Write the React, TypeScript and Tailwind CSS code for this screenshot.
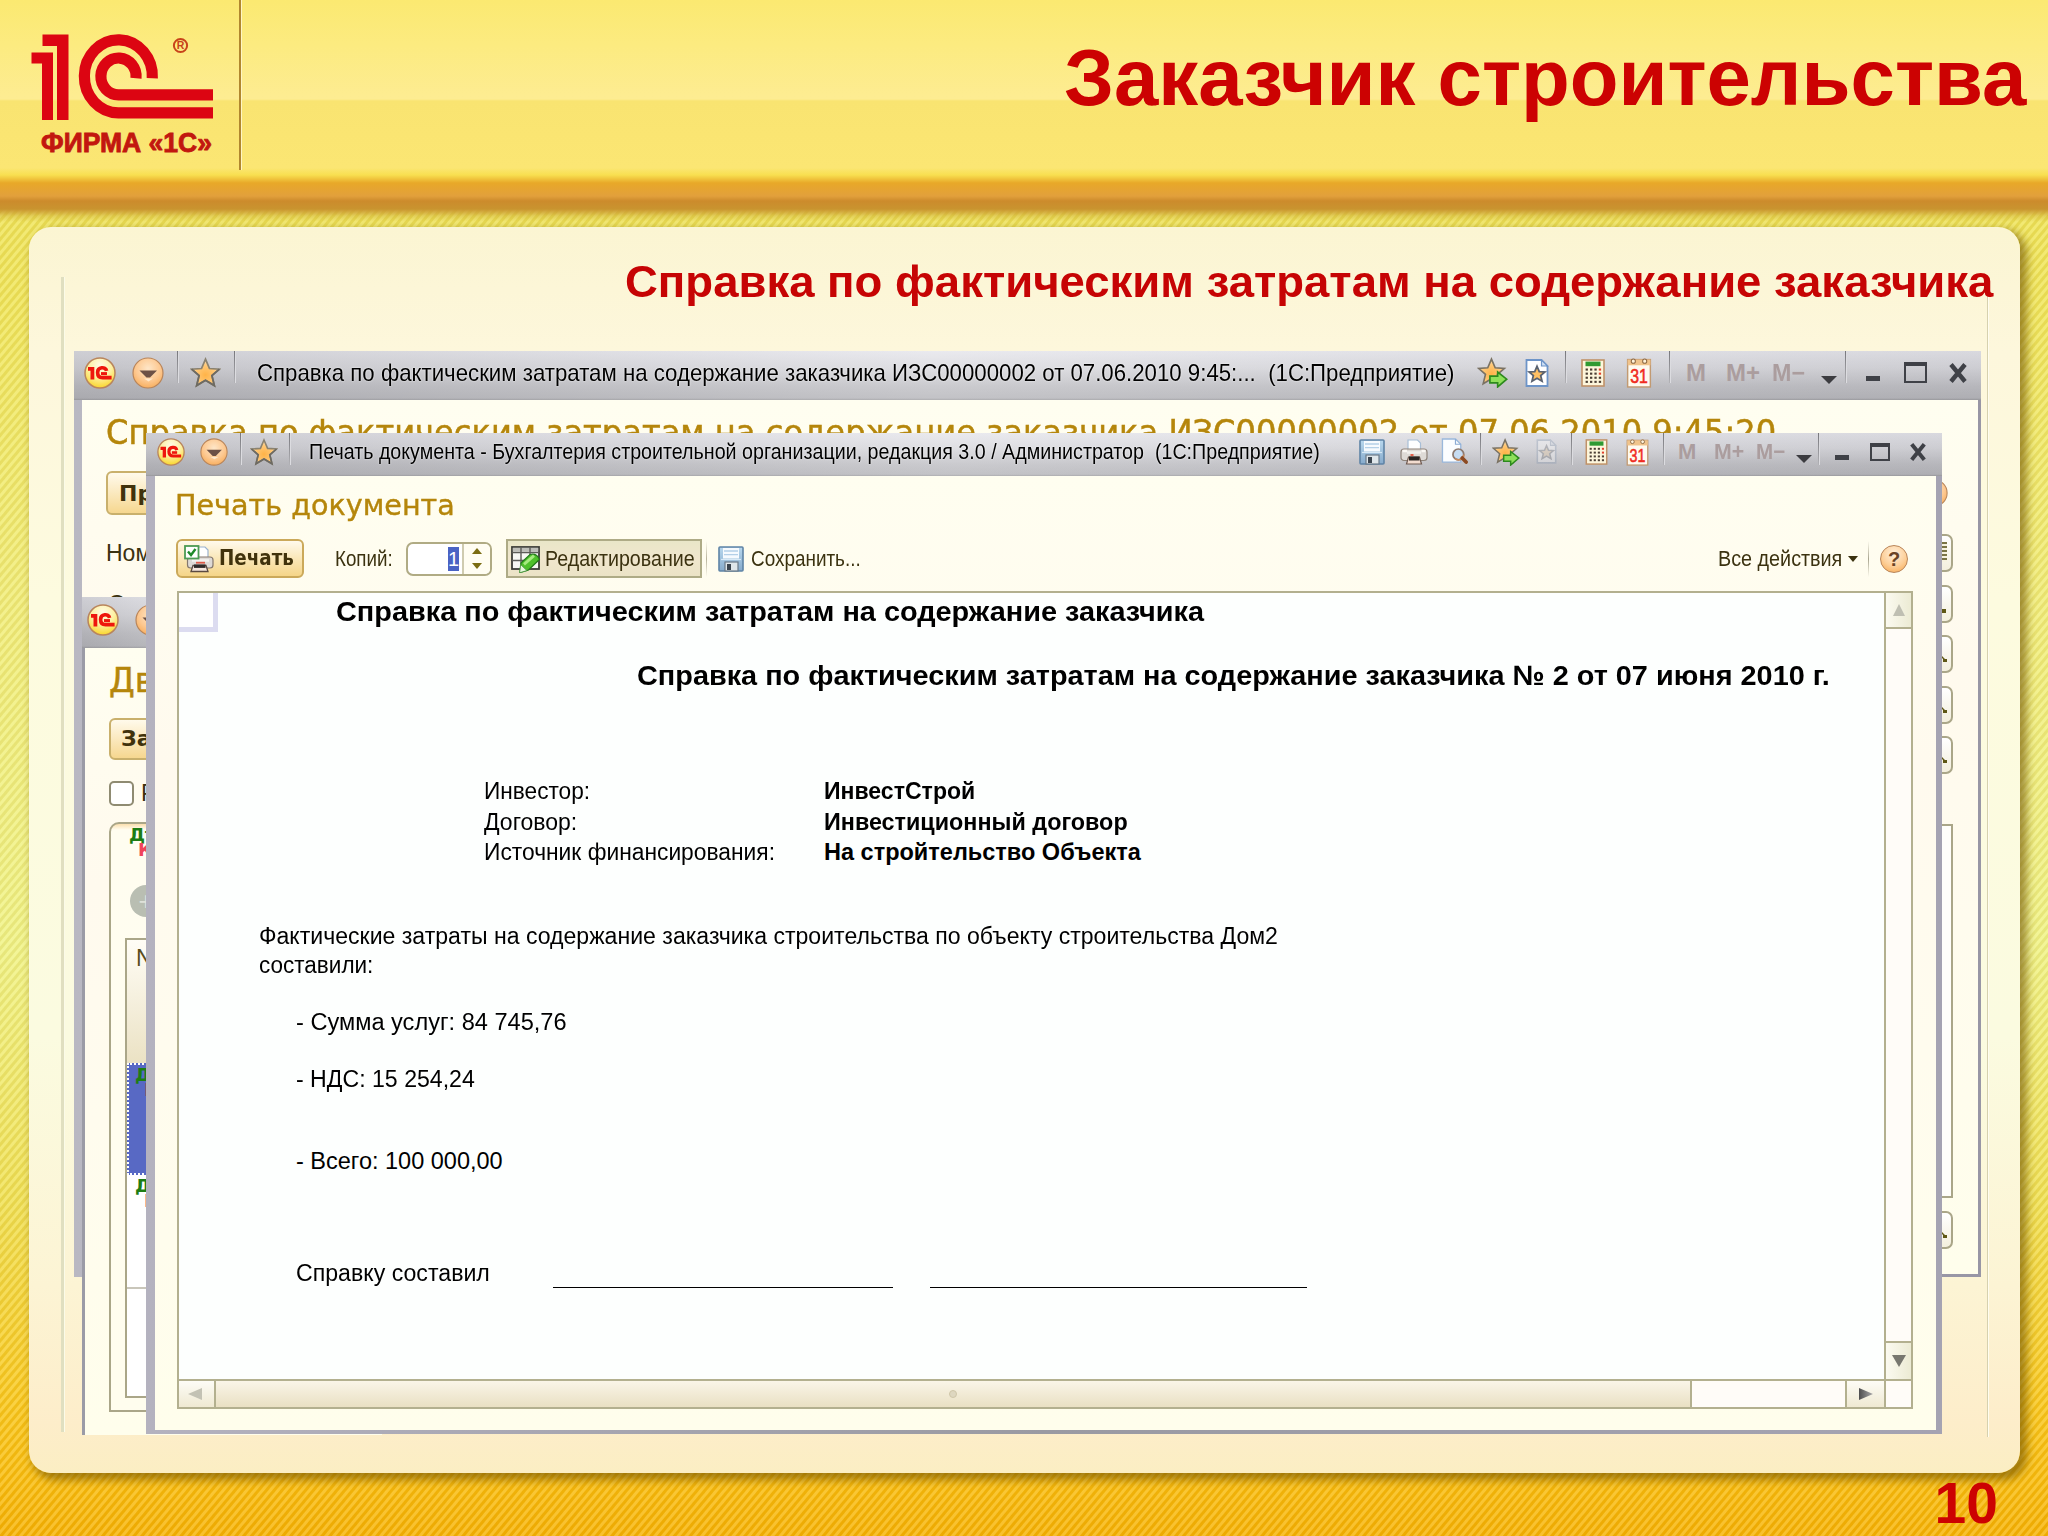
import { useLayoutEffect, useRef, useState, type ReactNode } from "react";

/** One line of text stretched or condensed to the width of its box. */
function Fit({ className, children }: { className: string; children: string }) {
  const box = useRef<HTMLSpanElement>(null);
  const inner = useRef<HTMLSpanElement>(null);
  const [scale, setScale] = useState(1);
  useLayoutEffect(() => {
    if (box.current && inner.current) {
      setScale(box.current.clientWidth / inner.current.offsetWidth);
    }
  }, []);
  return (
    <span ref={box} className={`block shrink-0 whitespace-pre ${className}`}>
      <span ref={inner} className="inline-block origin-left" style={{ transform: `scaleX(${scale})` }}>
        {children}
      </span>
    </span>
  );
}

const STAR = "M14 2 L17.6 10.4 L26.5 11 L19.8 16.8 L22 25.8 L14 21 L6 25.8 L8.2 16.8 L1.5 11 L10.4 10.4 Z";

function Defs() {
  return (
    <svg className="absolute h-0 w-0" aria-hidden="true">
      <defs>
        <radialGradient id="yellowBall" cx="0.5" cy="0.25" r="0.8">
          <stop offset="0" stopColor="#fffbe6" />
          <stop offset="0.5" stopColor="#fdf0a0" />
          <stop offset="1" stopColor="#f9d21c" />
        </radialGradient>
        <radialGradient id="orangeBall" cx="0.5" cy="0.35" r="0.75">
          <stop offset="0" stopColor="#fee6c8" />
          <stop offset="0.55" stopColor="#fdc890" />
          <stop offset="1" stopColor="#f6a54b" />
        </radialGradient>
        <radialGradient id="starFill" cx="0.5" cy="0.6" r="0.6">
          <stop offset="0" stopColor="#ffb347" />
          <stop offset="0.6" stopColor="#ffc877" />
          <stop offset="1" stopColor="#ffe3b8" />
        </radialGradient>
        <linearGradient id="blueFill" x1="0" y1="0" x2="0" y2="1">
          <stop offset="0" stopColor="#b9d8ee" />
          <stop offset="1" stopColor="#86aacb" />
        </linearGradient>
        <linearGradient id="greyArrow" x1="0" y1="0" x2="1" y2="0">
          <stop offset="0" stopColor="#4e4e4e" />
          <stop offset="1" stopColor="#a9a9a9" />
        </linearGradient>
      </defs>
    </svg>
  );
}

function Ball1C({ className }: { className: string }) {
  return (
    <svg viewBox="0 0 32 32" className={className}>
      <circle cx="16" cy="16" r="15" fill="url(#yellowBall)" stroke="#b9855c" strokeWidth="1.5" />
      <g fill="none" stroke="#ee160c">
        <path d="M4 11.8 H8.4 V22.4" strokeWidth="3.8" />
        <path d="M22.6 13.8 C21.6 9.4 13.6 9.6 13.6 15.4 C13.6 19.6 16.4 20.6 18.6 20.6 H27.6" strokeWidth="3.6" />
        <path d="M17 16.6 H23" strokeWidth="3" />
      </g>
    </svg>
  );
}

function BallDrop({ className }: { className: string }) {
  return (
    <svg viewBox="0 0 32 32" className={className}>
      <circle cx="16" cy="16" r="15" fill="url(#orangeBall)" stroke="#b9855a" strokeWidth="1.2" />
      <path d="M7.5 13.5 H25 L18 20.5 H14.5 Z" fill="#6d5146" />
      <path d="M12 21.6 H21 L16.5 24.4 Z" fill="#ffe9cd" />
    </svg>
  );
}

function Star({ className }: { className: string }) {
  return (
    <svg viewBox="0 0 28 28" className={className}>
      <path d={STAR} fill="url(#starFill)" stroke="#8a8270" strokeWidth="1.6" />
      <path d="M1.5 11 L8.2 16.8 L6 25.8 L14 21 L22 25.8 L19.8 16.8 L26.5 11" fill="none" stroke="#6d6a62" strokeWidth="1.6" />
    </svg>
  );
}

function StarArrow({ className }: { className: string }) {
  return (
    <svg viewBox="0 0 30 30" className={className}>
      <path d={STAR} fill="url(#starFill)" stroke="#7a7263" strokeWidth="1.6" />
      <path d="M12.5 18.5 H20 V14.5 L28.8 21.5 L20 29 V25 H12.5 Z" fill="#8ee05a" stroke="#2c8a1d" strokeWidth="1.6" />
    </svg>
  );
}

function PageStar({ className }: { className: string }) {
  return (
    <svg viewBox="0 0 24 28" className={className}>
      <path d="M1.5 1 H16.5 L22.5 7 V27 H1.5 Z" fill="#fff" stroke="#6d94c8" strokeWidth="1.8" />
      <path d="M16.5 1 V7 H22.5 Z" fill="#cfe0f5" stroke="#6d94c8" strokeWidth="1.2" />
      <path transform="translate(3.2 6) scale(0.63)" d={STAR} fill="#ffc063" stroke="#5a6270" strokeWidth="2.8" />
    </svg>
  );
}

function Calc({ className }: { className: string }) {
  const rows = [9.5, 13.6, 17.7, 21.8];
  const cols = [5.6, 10, 14.4, 18.8];
  return (
    <svg viewBox="0 0 24 28" className={className}>
      <rect x="1" y="1" width="22" height="26" fill="#fdf6dc" stroke="#c09268" strokeWidth="1.6" />
      <rect x="4.5" y="2.6" width="15" height="4.6" fill="#2f9a32" />
      {rows.map((y) =>
        cols.map((x) => (
          <rect key={`${x}-${y}`} x={x - 1} y={y} width="2.3" height="2.1" fill={x === 18.8 && y < 15 ? "#e2402c" : "#4a3d33"} />
        )),
      )}
    </svg>
  );
}

function Calendar({ className }: { className: string }) {
  return (
    <svg viewBox="0 0 24 30" className={className}>
      <rect x="1" y="2.5" width="22" height="26.5" fill="#fffaf0" stroke="#c29a72" strokeWidth="1.4" />
      <rect x="1" y="2.5" width="22" height="5.5" fill="#f0c48c" />
      <circle cx="6.5" cy="4" r="2" fill="#fff3dc" stroke="#8e6a45" strokeWidth="1" />
      <circle cx="17.5" cy="4" r="2" fill="#fff3dc" stroke="#8e6a45" strokeWidth="1" />
      <text x="12" y="25.5" textAnchor="middle" fontFamily="Liberation Sans, sans-serif" fontSize="19.5" fill="#f02c22" stroke="#f02c22" strokeWidth="0.6" textLength="17" lengthAdjust="spacingAndGlyphs">
        31
      </text>
    </svg>
  );
}

function Floppy({ className }: { className: string }) {
  return (
    <svg viewBox="0 0 26 26" className={className}>
      <rect x="1" y="1" width="24" height="24" rx="1" fill="url(#blueFill)" stroke="#5f84a6" strokeWidth="1.6" />
      <rect x="5" y="2" width="16" height="10.5" fill="#f6fafe" />
      <path d="M6 5 H20 M6 8.6 H20" stroke="#b4d0e8" strokeWidth="1.4" />
      <path d="M3 13.5 H23" stroke="#d8e9f6" strokeWidth="1.2" />
      <rect x="7" y="16" width="13" height="9" fill="#dfe6ea" stroke="#6b7a88" strokeWidth="1.2" />
      <rect x="9" y="18" width="4" height="6" fill="#3a434d" />
    </svg>
  );
}

function Printer({ className }: { className: string }) {
  return (
    <svg viewBox="0 0 28 26" className={className}>
      <path d="M8 1 H17.5 L20.5 4 V12 H8 Z" fill="#fdfeff" stroke="#a8bed6" strokeWidth="1.2" />
      <rect x="1" y="10" width="26" height="11.5" rx="3" fill="#dedad6" stroke="#8d8279" strokeWidth="1.2" />
      <path d="M2.5 12 H7 M21.5 12 H25.5" stroke="#fbf8f4" strokeWidth="2.4" />
      <path d="M7 13.5 H21" stroke="#f1efec" strokeWidth="2.6" />
      <rect x="10.5" y="15" width="3" height="2" fill="#e2604c" />
      <path d="M8.5 18 H19.5 L21.5 25 H6.5 Z" fill="#f2dccf" stroke="#6f5a50" strokeWidth="1.2" />
      <rect x="9" y="17.5" width="10.5" height="4" fill="#2a2523" />
    </svg>
  );
}

function Preview({ className }: { className: string }) {
  return (
    <svg viewBox="0 0 28 28" className={className}>
      <path d="M1.5 1 H15 L20.5 6.5 V25 H1.5 Z" fill="#fbfdff" stroke="#9ab8dc" strokeWidth="1.4" />
      <path d="M15 1 V6.5 H20.5" fill="none" stroke="#8cabd4" strokeWidth="1.2" />
      <circle cx="18" cy="17" r="5.6" fill="#c6dcf2" stroke="#8d7a70" strokeWidth="1.8" />
      <path d="M14.6 21.4 A5.6 5.6 0 0 0 23.6 17" fill="none" stroke="#c98a5c" strokeWidth="1.8" />
      <path d="M22 20.8 L26 25" stroke="#8c4a22" strokeWidth="3.8" strokeLinecap="round" />
    </svg>
  );
}

function PrintCheck() {
  return (
    <svg viewBox="0 0 30 28" className="h-7 w-[30px] shrink-0">
      <path d="M14 2 H21 L24 5 V13 H14 Z" fill="#fff" stroke="#9ab2cf" strokeWidth="1.2" />
      <rect x="3.5" y="12" width="25.5" height="11" rx="3" fill="#dedad6" stroke="#85786e" strokeWidth="1.2" />
      <path d="M8 15.5 H25" stroke="#f4f2ef" strokeWidth="2.6" />
      <rect x="12" y="16.8" width="9" height="1.8" fill="#dc5a48" />
      <path d="M9 20.5 H22 L24 26.5 H7 Z" fill="#f6e6dc" stroke="#5a4a42" strokeWidth="1.3" />
      <rect x="10" y="19.5" width="11.5" height="3.4" fill="#2f2a28" />
      <rect x="1" y="1" width="13.5" height="12.5" fill="#fff" stroke="#4d9b54" strokeWidth="1.8" />
      <path d="M4 6.5 L7 10 L11.5 4" fill="none" stroke="#1e8a2a" strokeWidth="2.4" />
    </svg>
  );
}

function GridPencil() {
  return (
    <svg viewBox="0 0 30 28" className="h-7 w-[30px] shrink-0">
      <rect x="1" y="2" width="27" height="22" fill="#f7f7f4" stroke="#3c3c38" strokeWidth="1.8" />
      <rect x="1.8" y="2.8" width="25.4" height="3.6" fill="#bdbdb8" />
      <path d="M1 7.5 H28 M1 15.5 H28 M10 2 V24 M19 2 V24" stroke="#5c5c58" strokeWidth="1.4" />
      <path d="M10 18 L19 9.5 Q26 8 28.4 14.5 L17.5 25 L9 27.5 Z" fill="#4fc02c" stroke="#237a1a" strokeWidth="1.2" />
      <path d="M13 19.4 L23 10.6" stroke="#a6ea80" strokeWidth="2.8" />
      <path d="M9.6 19.5 L16 25.6 L8.6 27.8 Z" fill="#e9f8de" stroke="#4b9a3f" strokeWidth="0.9" />
    </svg>
  );
}

function Cell({ className, children }: { className: string; children: ReactNode }) {
  return <div className={`flex h-full shrink-0 items-center justify-center ${className}`}>{children}</div>;
}

function Sep({ className }: { className: string }) {
  return (
    <div className={`flex h-full shrink-0 justify-center ${className}`}>
      <div className="h-[32px] w-[2px] shrink-0 border-r border-[#dcdce0] bg-gradient-to-b from-[#77777c] to-[#b2b2b6]" />
    </div>
  );
}

const Mem = ({ className, children }: { className: string; children: string }) => (
  <Fit className={`font-bold text-[#ab9d9e] ${className}`}>{children}</Fit>
);

const ChevronDown = () => (
  <svg viewBox="0 0 16 8" className="mt-[15px] h-2 w-4">
    <path d="M0 0 H16 L8 8 Z" fill="#3c3c40" />
  </svg>
);

const Minimize = () => <div className="mt-3 h-[5px] w-[14px] bg-[#3f4147]" />;

const Maximize = ({ className }: { className: string }) => (
  <div className={`border-2 border-t-[4px] border-[#3f4147] ${className}`} />
);

const Close = ({ className }: { className: string }) => (
  <svg viewBox="0 0 20 20" className={className}>
    <path d="M3 1.5 L17 18.5 M17 1.5 L3 18.5" stroke="#3f4147" strokeWidth="4.4" />
  </svg>
);

const barFill =
  "bg-[linear-gradient(90deg,rgba(150,150,155,0.28),rgba(255,255,255,0.22)_45%,rgba(150,150,155,0.14)),linear-gradient(180deg,#e4e4ea_0%,#d6d6db_35%,#bcbcc1_72%,#b2b2b7_96%,#97979b_100%)]";

const formFill = "bg-[linear-gradient(180deg,#fffef0,#fffaee_30%,#fffcee_60%,#fffeec)]";

/** Right end of a one-line input of the form below the print window. */
const FieldEnd = ({ className, children }: { className: string; children?: ReactNode }) => (
  <div
    className={`flex h-[38px] w-[30px] items-end justify-end rounded-[7px] border-2 border-[#aaa688] bg-gradient-to-b from-white to-[#f3efdd] ${className}`}
  >
    {children}
  </div>
);

const LensTip = () => (
  <svg viewBox="0 0 6 16" className="mr-[4px] mb-[8px] h-4 w-1.5">
    <path d="M0 0 V10 L2 12 V15 H6 V12 H4 L1 9 V0 Z" fill="#5e5715" />
  </svg>
);

function FormWindow() {
  return (
    <section className="absolute top-[351px] left-[74px] flex h-[926px] w-[1907px] flex-col bg-gradient-to-r from-[#b9b8c2] via-[#a2a2ac] to-[#9896a5]">
      <header className={`flex h-[49px] shrink-0 items-start pl-[6px] ${barFill}`}>
        <div className="flex h-[43px] items-center">
          <Cell className="w-10"><Ball1C className="size-8" /></Cell>
          <Cell className="w-14"><BallDrop className="size-8" /></Cell>
          <Sep className="w-1" />
          <Cell className="w-[50px]"><Star className="size-[31px]" /></Cell>
          <Sep className="mr-[17px] w-[10px]" />
          <Fit className="mr-px w-[1197px] text-[24px] leading-[40px] text-black [text-shadow:0_0_2px_#fff]">
            {"Справка по фактическим затратам на содержание заказчика ИЗС00000002 от 07.06.2010 9:45:...  (1С:Предприятие)"}
          </Fit>
          <Cell className="ml-[19px] w-9"><StarArrow className="size-[31px]" /></Cell>
          <Cell className="w-[54px]"><PageStar className="h-7 w-6" /></Cell>
          <Sep className="w-1" />
          <Cell className="w-[50px]"><Calc className="h-7 w-[26px]" /></Cell>
          <Cell className="w-[42px]"><Calendar className="h-[31px] w-[26px]" /></Cell>
          <Sep className="w-5" />
          <Cell className="w-8"><Mem className="w-[20px] text-[24px]">M</Mem></Cell>
          <Cell className="w-[62px]"><Mem className="w-[34px] text-[24px]">M+</Mem></Cell>
          <Cell className="w-7"><Mem className="w-[33px] text-[24px]">M−</Mem></Cell>
          <Cell className="ml-[13px] w-7"><ChevronDown /></Cell>
          <Sep className="w-1.5" />
          <Cell className="w-12"><Minimize /></Cell>
          <Cell className="w-9"><Maximize className="h-[21px] w-[23px]" /></Cell>
          <Cell className="ml-[7px] w-9"><Close className="size-5" /></Cell>
        </div>
      </header>
      <div className={`mr-[3px] mb-[3px] ml-2 flex grow justify-between overflow-hidden ${formFill}`}>
        <div className="flex flex-col items-start pl-6">
          <Fit className="mt-[9px] w-[1670px] font-['DejaVu_Sans'] text-[33px] leading-[48px] text-[#b5860b] [-webkit-text-stroke:0.5px_#b5860b]">
            {"Справка по фактическим затратам на содержание заказчика ИЗС00000002 от 07.06.2010 9:45:20"}
          </Fit>
          <div className="mt-[14px] h-11 w-40 rounded-md border-2 border-[#c9b06c] bg-gradient-to-b from-[#fffaeb] to-[#f6d78f] pl-[11px] font-['DejaVu_Sans'] text-[22px] leading-[42px] font-bold text-[#40320c]">
            Провести
          </div>
          <span className="mt-[23px] text-[23px] leading-[30px] text-[#3b3210]">Номер:</span>
          <span className="mt-[21px] pl-0.5 text-[23px] leading-[30px] text-[#3b3210]">Организация:</span>
        </div>
        <div className="flex flex-col items-end pr-[25px]">
          <BallDrop className="mt-[79px] mr-[5px] size-7" />
          <FieldEnd className="mt-[27px]">
            <div className="mr-1 mb-2 h-5 w-2 bg-[repeating-linear-gradient(180deg,#7a7445_0_2px,#f6f2df_2px_4px)]" />
          </FieldEnd>
          <FieldEnd className="mt-[13px]">
            <div className="mr-[5px] mb-2 h-1 w-[5px] bg-[#5e5715]" />
          </FieldEnd>
          <FieldEnd className="mt-[12px]"><LensTip /></FieldEnd>
          <FieldEnd className="mt-[13px]"><LensTip /></FieldEnd>
          <FieldEnd className="mt-[12px]"><LensTip /></FieldEnd>
          <div className="mt-[50px] h-[374px] w-[60px] border-2 border-[#aaa688] bg-[#fffefa]" />
          <FieldEnd className="mt-[13px]"><LensTip /></FieldEnd>
        </div>
      </div>
    </section>
  );
}

function DtKt({ className }: { className: string }) {
  return (
    <div className={`flex flex-col font-['DejaVu_Sans'] text-[18px] leading-[15px] font-bold ${className}`}>
      <span className="text-[#1d7d14]">Дт</span>
      <span className="pl-[9px] text-[#f0435a]">Кт</span>
    </div>
  );
}

function MovementsWindow() {
  return (
    <section className="absolute top-[597px] left-[82px] flex h-[838px] w-[300px] flex-col bg-[#9b9ba6]">
      <header className={`flex h-[51px] shrink-0 items-start pl-[1px] ${barFill}`}>
        <div className="flex h-[46px] items-center">
          <Cell className="w-10"><Ball1C className="size-8" /></Cell>
          <Cell className="w-[56px]"><BallDrop className="size-8" /></Cell>
        </div>
      </header>
      <div className={`ml-[3px] flex grow flex-col items-start pl-6 ${formFill}`}>
        <span className="mt-[9px] font-['DejaVu_Sans'] text-[33px] leading-[48px] text-[#b5860b] [-webkit-text-stroke:0.5px_#b5860b]">Движения</span>
        <div className="mt-[13px] h-[42px] w-40 rounded-md border-2 border-[#c9b06c] bg-gradient-to-b from-[#fffaeb] to-[#f6d78f] pl-2.5 font-['DejaVu_Sans'] text-[22px] leading-[38px] font-bold text-[#40320c]">
          Записать
        </div>
        <div className="mt-[21px] flex h-[25px] items-center gap-[7px]">
          <div className="size-[25px] rounded-[5px] border-2 border-[#8f8b72] bg-white" />
          <span className="text-[23px] text-[#3b3210]">Ручная</span>
        </div>
        <div className="mt-4 flex h-[590px] w-60 shrink-0 flex-col rounded-tl-[10px] border-2 border-[#aaa688] bg-gradient-to-b from-[#fbdfae] via-[#fffdf0] via-[1%] to-[#fffdee] pl-[14px]">
          <DtKt className="mt-[3px] pl-1" />
          <div className="mt-[28px] ml-[5px] flex h-8 w-8 shrink-0 items-center justify-center rounded-full bg-[#b9beb2] text-[26px] leading-none text-[#dfe2da]">
            +
          </div>
          <div className="mt-[21px] flex h-[460px] w-52 shrink-0 flex-col border-2 border-[#aaa688] bg-white">
            <div className="h-[123px] shrink-0 bg-gradient-to-b from-[#fffdf6] to-[#ebe2c4] pt-1 pl-[9px] text-[23px] leading-[28px] text-[#5a4d1c]">N</div>
            <div className="h-[112px] shrink-0 border-2 border-dotted border-white bg-[#5869c4] pl-1.5">
              <DtKt className="mt-0.5" />
            </div>
            <div className="h-[114px] shrink-0 border-b-2 border-[#c9c6ba] pl-2">
              <DtKt className="mt-[3px]" />
            </div>
          </div>
        </div>
      </div>
    </section>
  );
}

const docText = "text-[23.5px] text-black";

function PrintedSheet() {
  return (
    <div className="flex h-[786px] w-[1705px] flex-col items-start bg-[#fdfffe] text-black">
      <div className="flex h-[39px] items-start">
        <div className="h-[39px] w-[39px] border-r-[5px] border-b-[5px] border-[#dcdcf0] bg-white" />
        <Fit className="ml-[118px] w-[868px] text-[28px] leading-[38px] font-bold">Справка по фактическим затратам на содержание заказчика</Fit>
      </div>
      <Fit className="mt-[24px] ml-[458px] w-[1193px] text-[28px] leading-[40px] font-bold">
        Справка по фактическим затратам на содержание заказчика № 2 от 07 июня 2010 г.
      </Fit>
      <div className="mt-[80px] ml-[305px] grid grid-cols-[340px_auto] text-[23.5px] leading-[30.5px]">
        <Fit className="w-[106px]">Инвестор:</Fit>
        <Fit className="w-[151px] font-bold">ИнвестСтрой</Fit>
        <Fit className="w-[93px]">Договор:</Fit>
        <Fit className="w-[304px] font-bold">Инвестиционный договор</Fit>
        <Fit className="w-[291px]">Источник финансирования:</Fit>
        <Fit className="w-[317px] font-bold">На стройтельство Объекта</Fit>
      </div>
      <div className={`mt-[54px] ml-[80px] leading-[29px] ${docText}`}>
        <Fit className="w-[1019px]">Фактические затраты на содержание заказчика строительства по объекту строительства Дом2</Fit>
        <Fit className="w-[114px]">составили:</Fit>
      </div>
      <div className={`ml-[117px] flex flex-col leading-[30px] ${docText}`}>
        <Fit className="mt-[27px] w-[271px]">- Сумма услуг: 84 745,76</Fit>
        <Fit className="mt-[27px] w-[179px]">- НДС: 15 254,24</Fit>
        <Fit className="mt-[52px] w-[207px]">- Всего: 100 000,00</Fit>
        <div className="mt-[82px] flex items-start">
          <Fit className="w-[194px]">Справку составил</Fit>
          <div className="ml-[63px] h-[30px] w-[340px] border-b-[1.5px] border-black" />
          <div className="ml-[37px] h-[30px] w-[377px] border-b-[1.5px] border-black" />
        </div>
      </div>
    </div>
  );
}

function PrintWindow() {
  return (
    <section className="absolute top-[433px] left-[146px] flex h-[1001px] w-[1796px] flex-col bg-gradient-to-r from-[#b4b2bf] via-[#9a9aa2] to-[#a5a3b2]">
      <header className={`flex h-[43px] shrink-0 items-start pl-[6px] ${barFill}`}>
        <div className="flex h-[37px] items-center">
          <Cell className="w-[38px]"><Ball1C className="size-7" /></Cell>
          <Cell className="w-12"><BallDrop className="size-7" /></Cell>
          <Sep className="w-1.5" />
          <Cell className="w-10"><Star className="size-7" /></Cell>
          <Sep className="mr-[13px] w-3" />
          <Fit className="mr-px w-[1011px] text-[22px] leading-[35px] text-black [text-shadow:0_0_2px_#fff]">
            {"Печать документа - Бухгалтерия строительной организации, редакция 3.0 / Администратор  (1С:Предприятие)"}
          </Fit>
          <Cell className="ml-[31px] w-10"><Floppy className="size-[26px]" /></Cell>
          <Cell className="w-11"><Printer className="h-[26px] w-7" /></Cell>
          <Cell className="w-9"><Preview className="size-[27px]" /></Cell>
          <Sep className="w-[18px]" />
          <Cell className="w-8"><StarArrow className="size-7" /></Cell>
          <Cell className="w-12"><PageStar className="h-[25px] w-[21px] opacity-30 saturate-50" /></Cell>
          <Sep className="w-1" />
          <Cell className="w-11"><Calc className="h-[26px] w-[23px]" /></Cell>
          <Cell className="w-[38px]"><Calendar className="h-7 w-[23px]" /></Cell>
          <Sep className="w-4" />
          <Cell className="w-[30px]"><Mem className="w-[18px] text-[22px]">M</Mem></Cell>
          <Cell className="w-[54px]"><Mem className="w-[30px] text-[22px]">M+</Mem></Cell>
          <Cell className="w-7"><Mem className="w-[29px] text-[22px]">M−</Mem></Cell>
          <Cell className="ml-1.5 w-7"><ChevronDown /></Cell>
          <Sep className="w-0.5" />
          <Cell className="w-11"><Minimize /></Cell>
          <Cell className="w-8"><Maximize className="h-[18px] w-5" /></Cell>
          <Cell className="w-11"><Close className="size-[18px]" /></Cell>
        </div>
      </header>
      <div className={`mr-1.5 mb-[4px] ml-[9px] flex grow flex-col ${formFill}`}>
        <Fit className="mt-[10px] ml-5 w-[280px] font-['DejaVu_Sans'] text-[28px] leading-[40px] text-[#b5860b] [-webkit-text-stroke:0.4px_#b5860b]">Печать документа</Fit>
        <div className="mt-[13px] ml-[21px] flex h-[39px] items-center text-[22px] text-[#3b3210]">
          <div className="flex h-[39px] w-[128px] shrink-0 items-center rounded-md border-2 border-[#cba95a] bg-gradient-to-b from-[#fffaec] via-[#fae7b8] to-[#f5d588] pl-[6px]">
            <PrintCheck />
            <Fit className="ml-[5px] w-[75px] font-['DejaVu_Sans'] text-[21px] leading-[33px] font-bold text-[#40320c]">Печать</Fit>
          </div>
          <Fit className="ml-[31px] w-[58px] leading-[39px]">Копий:</Fit>
          <div className="ml-[13px] flex h-[34px] w-[86px] shrink-0 overflow-hidden rounded-[7px] border-2 border-[#b0ab84] bg-white">
            <div className="flex w-[56px] items-center justify-end border-r-2 border-[#cfcbb0] pr-[3px]">
              <span className="w-[11px] bg-[#4a63c4] text-center text-[20px] leading-[24px] text-white">1</span>
            </div>
            <div className="flex grow flex-col items-center justify-center gap-[9px] bg-[#fffdf2]">
              <svg viewBox="0 0 10 6" className="h-1.5 w-2.5"><path d="M5 0 L10 6 H0 Z" fill="#7b6c12" /></svg>
              <svg viewBox="0 0 10 6" className="h-1.5 w-2.5"><path d="M0 0 H10 L5 6 Z" fill="#7b6c12" /></svg>
            </div>
          </div>
          <div className="ml-[14px] flex h-[39px] w-[196px] shrink-0 items-center border-2 border-[#aeab86] bg-[linear-gradient(180deg,#e9e6c8,#f0e6cd_50%,#ebe3c6)] pl-[3px]">
            <GridPencil />
            <Fit className="ml-1 w-[150px] leading-[35px]">Редактирование</Fit>
          </div>
          <div className="ml-1 h-9 w-px shrink-0 bg-gradient-to-b from-transparent via-[#b8b39c] to-transparent" />
          <Floppy className="ml-[11px] size-[26px] shrink-0" />
          <Fit className="ml-[7px] w-[110px] leading-[39px]">Сохранить...</Fit>
          <Fit className="ml-auto w-[124px] leading-[39px]">Все действия</Fit>
          <svg viewBox="0 0 10 6" className="ml-[6px] h-1.5 w-2.5 shrink-0"><path d="M0 0 H10 L5 6 Z" fill="#3b3210" /></svg>
          <div className="ml-[10px] h-9 w-px shrink-0 bg-gradient-to-b from-transparent via-[#a9a590] to-transparent" />
          <div className="mr-[28px] ml-[11px] flex size-[28px] shrink-0 items-center justify-center rounded-full border border-[#b9855a] bg-[radial-gradient(circle_at_50%_30%,#fff0dc,#fdcf98_55%,#f6a54b)] text-[20px] font-bold text-[#6a4326]">
            ?
          </div>
        </div>
        <div className="mt-[13px] ml-[22px] flex h-[818px] w-[1736px] flex-col border-2 border-[#b3b08f] bg-[#fffefb]">
          <div className="flex h-[786px] shrink-0">
            <PrintedSheet />
            <div className="flex w-[27px] shrink-0 flex-col justify-between border-l-2 border-[#b3b08f] bg-[#fffcf8]">
              <div className="flex h-9 items-center justify-center border-b-2 border-[#b3b08f] bg-gradient-to-r from-[#fbfaf0] to-[#ecebd4]">
                <svg viewBox="0 0 14 14" className="h-3.5 w-3"><path d="M7 0 L14 14 H0 Z" fill="#bfbfb2" /></svg>
              </div>
              <div className="flex h-[38px] items-center justify-center border-t-2 border-[#b3b08f] bg-gradient-to-r from-[#fbfaf0] to-[#ecebd4]">
                <svg viewBox="0 0 14 12" className="h-3 w-3.5"><path d="M0 0 H14 L7 12 Z" fill="#77776f" /></svg>
              </div>
            </div>
          </div>
          <div className="flex grow border-t-2 border-[#b3b08f] bg-[#fffcf8]">
            <div className="flex w-[37px] shrink-0 items-center justify-center border-r-2 border-[#b3b08f] bg-gradient-to-b from-[#fdfcf6] to-[#efe9d2] pr-1">
              <svg viewBox="0 0 14 12" className="h-3 w-3.5"><path d="M14 0 V12 L0 6 Z" fill="#c3c2b4" /></svg>
            </div>
            <div className="flex w-[1476px] shrink-0 items-center justify-center border-r-2 border-[#b3b08f] bg-gradient-to-b from-[#faf5e8] to-[#e9e0c3]">
              <div className="size-2 rounded-full border border-[#cfc6a8] bg-[#ded7c0]" />
            </div>
            <div className="w-[153px] shrink-0" />
            <div className="flex w-[41px] shrink-0 items-center justify-center border-x-2 border-[#b3b08f] bg-gradient-to-b from-[#fdfcf6] to-[#efe9d2]">
              <svg viewBox="0 0 14 12" className="h-3 w-3.5"><path d="M0 0 V12 L14 6 Z" fill="url(#greyArrow)" /></svg>
            </div>
          </div>
        </div>
      </div>
    </section>
  );
}

function Logo() {
  return (
    <svg viewBox="0 0 239 170" className="h-[170px] w-[239px] shrink-0">
      <g fill="#dc0512">
        <path d="M42.5 34.5 H68.5 V120 H57 V46 H42.5 Z" />
        <path d="M31.5 52.5 H53 V120 H42 V63.5 H31.5 Z" />
      </g>
      <g fill="none" stroke="#dc0512" strokeWidth="11.2">
        <path d="M152.3 78.3 A34 36.5 0 1 0 118.5 112.8 H213" />
        <path d="M136 78.3 A17.6 18.4 0 1 0 118.5 94.8 H213" />
      </g>
      <circle cx="180.5" cy="45.5" r="6.6" fill="none" stroke="#c8431a" strokeWidth="2" />
      <text x="180.5" y="49.4" textAnchor="middle" fontFamily="Liberation Sans, sans-serif" fontSize="10.5" fontWeight="700" fill="#c8431a">R</text>
      <text x="41" y="152" fontFamily="Liberation Sans, sans-serif" fontSize="28" fontWeight="700" fill="#c2170f" stroke="#c2170f" strokeWidth="0.9" textLength="171" lengthAdjust="spacingAndGlyphs">
        ФИРМА «1С»
      </text>
    </svg>
  );
}

export default function App() {
  return (
    <main className="relative flex h-[1536px] w-[2048px] flex-col overflow-hidden bg-[repeating-linear-gradient(130deg,rgba(255,255,200,0.22)_0_2px,rgba(160,130,0,0.1)_3px_5px,rgba(255,255,200,0.22)_6px),linear-gradient(180deg,#ece058_0,#efe45c_300px,#f0ec7c_600px,#eff28a_950px,#efdf55_1200px,#f9c51d_1400px,#f9b90c_1480px,#f6ae02_1536px)] font-['Liberation_Sans',sans-serif]">
      <Defs />
      <header className="flex h-[222px] shrink-0 items-start bg-[linear-gradient(180deg,#fbe971_0,#fceb80_45px,#fdec92_99px,#f9e471_101px,#fbe673_168px,#f8df50_175px,#e8a828_183px,#e2a03c_196px,#cc8b2c_201px,#c9942f_209px,rgba(205,170,50,0.4)_216px,transparent_222px)]">
        <Logo />
        <div className="h-[170px] w-[3px] border-r border-[#fff6c4] bg-[#b1872f]" />
        <Fit className="mt-8 mr-[22px] ml-auto w-[962px] text-[80px] leading-[92px] font-bold text-[#cc0202]">Заказчик строительства</Fit>
      </header>
      <div className="mt-[5px] ml-[29px] flex h-[1246px] w-[1991px] shrink-0 justify-between rounded-[22px] bg-[linear-gradient(180deg,#fbf5d2_0%,#fdf7dc_10%,#fdfbdf_30%,#fbfbe0_65%,#fcf4d4_85%,#fdedca_96%,#fbeec3_100%)] pr-[31px] pl-8 shadow-[5px_5px_9px_2px_rgba(110,80,0,0.6)]">
        <div className="mt-[50px] h-[1155px] w-[4px] border-r border-[#fbfbe8] bg-[#e0dfc0]" />
        <Fit className="mt-6 mr-[-6px] ml-auto w-[1368px] text-[45px] leading-[62px] font-bold text-[#c60404]">
          Справка по фактическим затратам на содержание заказчика
        </Fit>
        <div className="mt-[70px] h-[1140px] w-[2px] border-r border-[#fffdf0] bg-[#d6d1ae]" />
      </div>
      <div className="mt-[-1px] mr-[50px] flex justify-end text-[57px] leading-[62px] font-bold text-[#cc0202]">10</div>
      <FormWindow />
      <MovementsWindow />
      <PrintWindow />
    </main>
  );
}
